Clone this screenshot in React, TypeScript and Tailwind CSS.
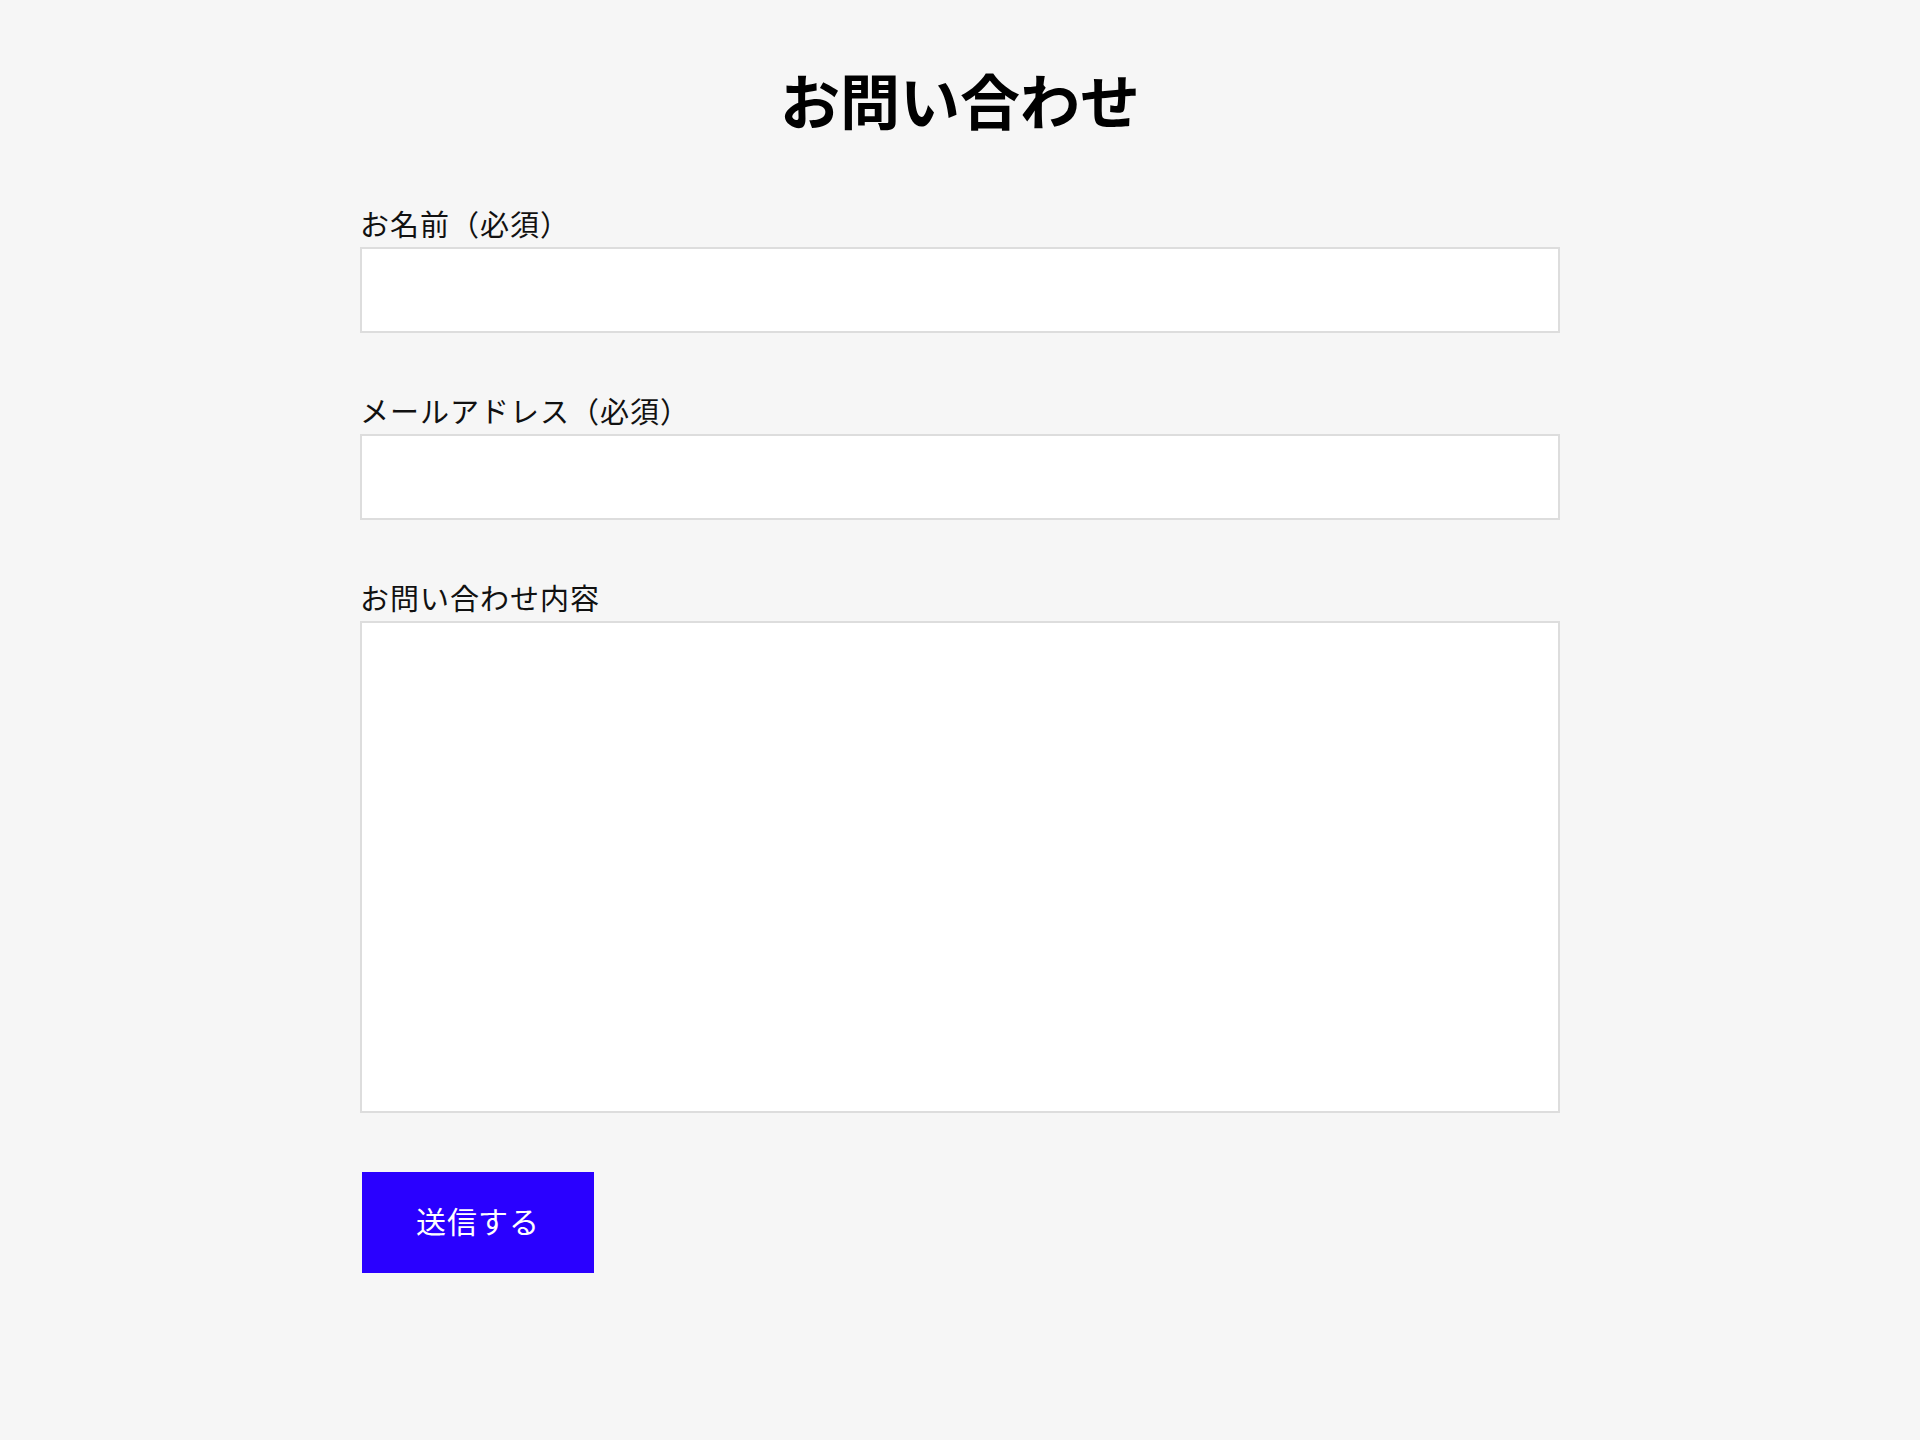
import { useState } from 'react';

function Field({
  label,
  multiline,
  value,
  onChange,
}: {
  label: string;
  multiline?: boolean;
  value: string;
  onChange: (v: string) => void;
}) {
  return (
    <div>
      <label className="block text-[29px] leading-[42px] tracking-[1px] text-[#111]">{label}</label>
      {multiline ? (
        <textarea
          value={value}
          onChange={(e) => onChange(e.target.value)}
          className="mt-[3px] block h-[492px] w-full resize-none border-2 border-[#dddddd] bg-white px-4 py-3 text-[28px] outline-none"
        />
      ) : (
        <input
          value={value}
          onChange={(e) => onChange(e.target.value)}
          className="mt-[3px] block h-[86px] w-full border-2 border-[#dddddd] bg-white px-4 text-[28px] outline-none"
        />
      )}
    </div>
  );
}

export default function App() {
  const [name, setName] = useState('');
  const [email, setEmail] = useState('');
  const [message, setMessage] = useState('');

  return (
    <div
      className="min-h-screen bg-[#f6f6f6] text-black"
      style={{ fontFamily: '"Noto Sans CJK JP", "Noto Sans", sans-serif' }}
    >
      <div className="mx-auto w-[1200px] pt-[54px]">
        <h1 className="text-center text-[60px] font-bold leading-[90px]">お問い合わせ</h1>
        <form className="mt-[58px] flex flex-col gap-[56px]" onSubmit={(e) => e.preventDefault()}>
          <Field label="お名前（必須）" value={name} onChange={setName} />
          <Field label="メールアドレス（必須）" value={email} onChange={setEmail} />
          <Field label="お問い合わせ内容" multiline value={message} onChange={setMessage} />
        </form>
        <button
          type="submit"
          className="ml-[2px] mt-[59px] flex h-[101px] w-[232px] items-center justify-center bg-[#2a00ff] pb-[4px] text-[30px] tracking-[1px] text-white"
        >
          送信する
        </button>
      </div>
    </div>
  );
}
